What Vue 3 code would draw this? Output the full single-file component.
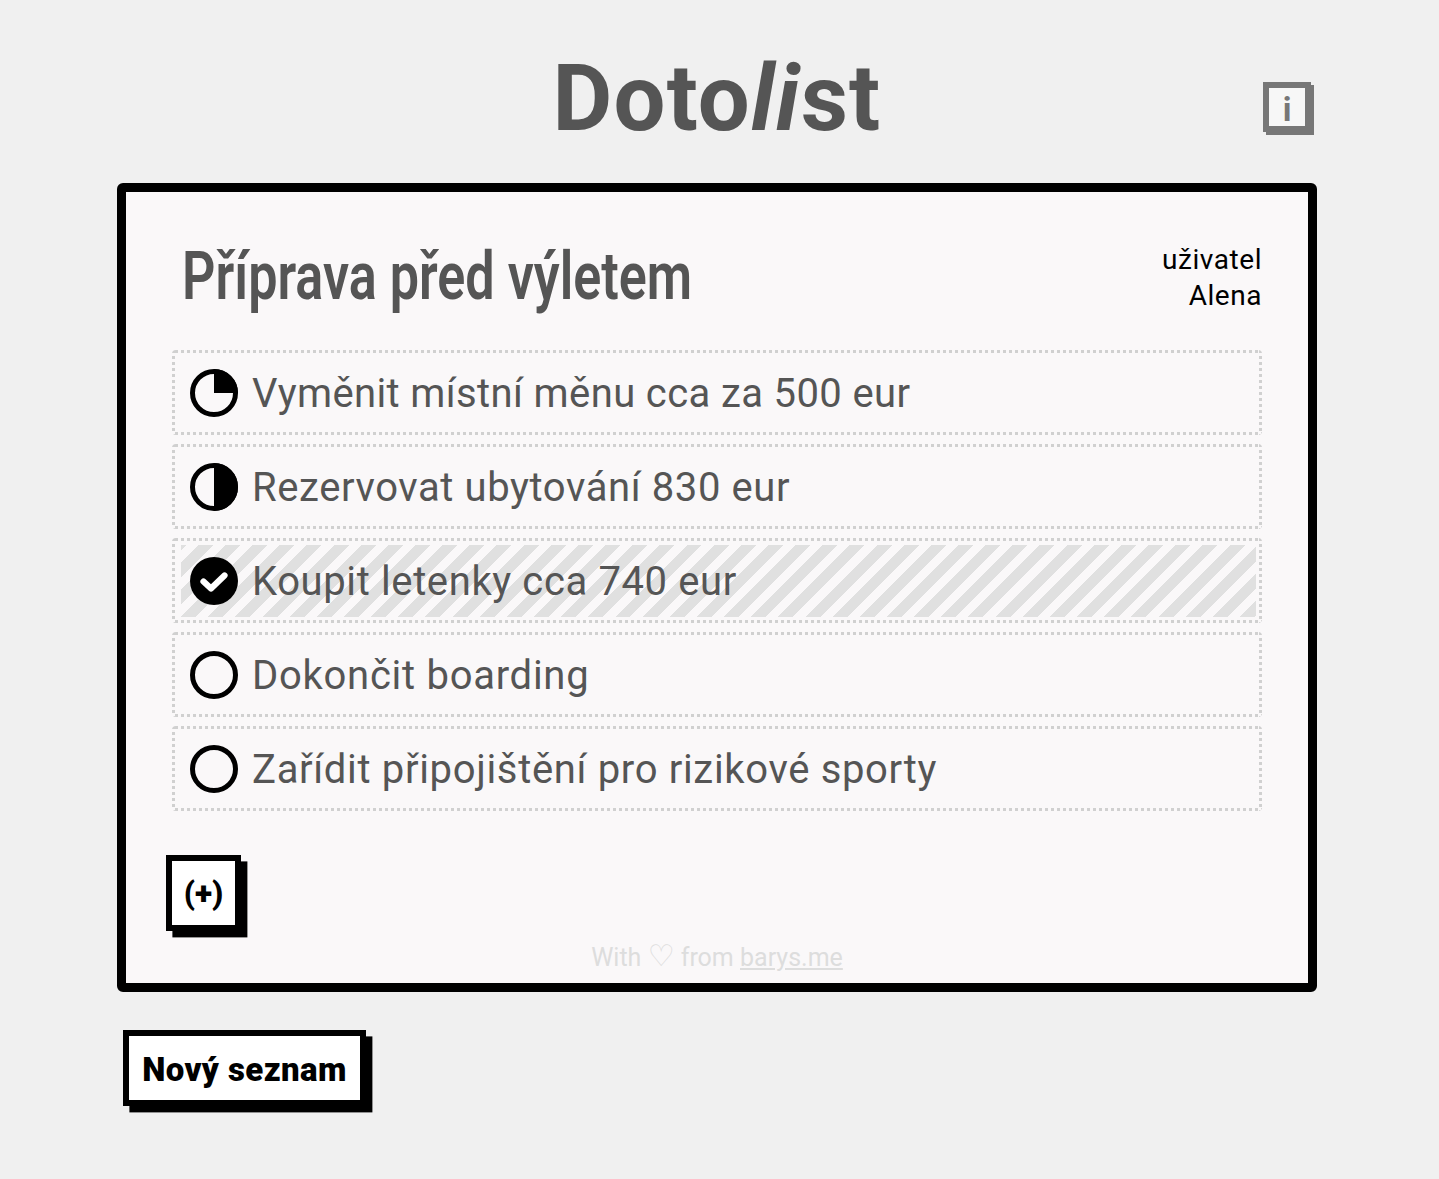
<script setup>
const tasks = [
  { id: 1, text: 'Vyměnit místní měnu cca za 500 eur', state: 'quarter', track: 0.38 },
  { id: 2, text: 'Rezervovat ubytování 830 eur', state: 'half', track: 0.6 },
  { id: 3, text: 'Koupit letenky cca 740 eur', state: 'done', track: 0.62 },
  { id: 4, text: 'Dokončit boarding', state: 'empty', track: 0.73 },
  { id: 5, text: 'Zařídit připojištění pro rizikové sporty', state: 'empty', track: 0.67 },
]
</script>

<template>
  <div class="page">
    <header class="top">
      <span></span>
      <h1 class="logo">Doto<i>li</i>st</h1>
      <button class="info">i</button>
    </header>

    <main class="card">
      <div class="head">
        <h2 class="title">Příprava před výletem</h2>
        <div class="user">uživatel<br />Alena</div>
      </div>

      <ul class="tasks">
        <li v-for="t in tasks" :key="t.id" class="task">
          <div class="task-inner" :class="{ striped: t.state === 'done' }">
            <svg class="icon" viewBox="0 0 48 48">
              <template v-if="t.state === 'done'">
                <circle cx="24" cy="24" r="24" fill="#000" />
                <path d="M13.5 24.5l7.5 7 13.5-13" fill="none" stroke="#fff" stroke-width="6.2" stroke-linecap="round" stroke-linejoin="round" />
              </template>
              <template v-else>
                <circle cx="24" cy="24" r="21.5" fill="none" stroke="#000" stroke-width="5" />
                <path v-if="t.state === 'quarter'" d="M24 0a24 24 0 0 1 24 24H24z" fill="#000" />
                <path v-if="t.state === 'half'" d="M24 0a24 24 0 0 1 0 48z" fill="#000" />
              </template>
            </svg>
            <span class="task-text" :style="{ letterSpacing: t.track + 'px' }">{{ t.text }}</span>
          </div>
        </li>
      </ul>

      <button class="add">(+)</button>

      <footer class="credit">With <span class="heart">♡</span> from <a href="#">barys.me</a></footer>
    </main>

    <button class="new">Nový seznam</button>
  </div>
</template>

<style>
html, body { background: #f0f0f0; }
</style>

<style scoped>
.page {
  width: 1200px;
  height: 1179px;
  margin-left: 117px;
  font-family: Roboto, "Liberation Sans", sans-serif;
  color: #555;
  overflow: hidden;
}
.top {
  height: 183px;
  display: grid;
  grid-template-columns: 1fr auto 1fr;
  align-items: start;
}
.logo {
  margin: 44px 0 0;
  font-size: 92px;
  line-height: 110px;
  font-weight: 700;
  letter-spacing: 1.2px;
}
.info {
  justify-self: end;
  margin: 82px 6px 0 0;
  width: 48px;
  height: 50px;
  padding: 3px 0 0;
  border: 6px solid #777;
  box-shadow: 3px 3px 0 #777;
  background: #f7f7f7;
  color: #777;
  font: 700 33px/38px Roboto, sans-serif;
}
.card {
  box-sizing: border-box;
  height: 809px;
  border: 9px solid #000;
  border-radius: 6px;
  background: #faf8f9;
  padding: 49px 46px 0;
}
.head {
  display: flex;
  justify-content: space-between;
  align-items: flex-start;
  height: 72px;
}
.title {
  margin: 0 0 0 10px;
  font-size: 66px;
  line-height: 72px;
  font-weight: 600;
  white-space: nowrap;
  transform: scaleX(0.79);
  transform-origin: left center;
}
.user {
  font-size: 28px;
  line-height: 36px;
  letter-spacing: 0.55px;
  color: #000;
  text-align: right;
  padding-top: 1px;
}
.tasks {
  list-style: none;
  margin: 37px 0 0;
  padding: 0;
  display: flex;
  flex-direction: column;
  gap: 9px;
}
.task {
  box-sizing: border-box;
  height: 85px;
  padding: 7px 6px 6px 9px;
  border-radius: 4px;
  background:
    linear-gradient(90deg, #d0d0d0 50%, transparent 0) 3px 0 / 6px 3px repeat-x,
    linear-gradient(90deg, #d0d0d0 50%, transparent 0) 3px 100% / 6px 3px repeat-x,
    linear-gradient(0deg, #d0d0d0 50%, transparent 0) 0 3px / 3px 6px repeat-y,
    linear-gradient(0deg, #d0d0d0 50%, transparent 0) 100% 3px / 3px 6px repeat-y;
}
.task-inner {
  height: 100%;
  display: flex;
  align-items: center;
  gap: 14px;
  padding-left: 9px;
}
.striped {
  background: repeating-linear-gradient(135deg, #e0e0e0 0 3.6px, transparent 3.6px 12.2px, #e0e0e0 12.2px 19.2px);
}
.icon {
  width: 48px;
  height: 48px;
  flex: none;
}
.task-text {
  font-size: 40px;
  line-height: 48px;
  white-space: nowrap;
  padding-top: 1px;
}
.add, .new {
  display: block;
  box-sizing: border-box;
  padding: 0;
  border: 6px solid #000;
  box-shadow: 6.4px 6.4px 0 #000;
  background: #fff;
  color: #000;
  font-family: Roboto, sans-serif;
  font-weight: 900;
}
.add {
  width: 75px;
  height: 76px;
  margin: 44px 0 0 -6px;
  font-size: 32px;
}
.credit {
  margin-top: 10px;
  text-align: center;
  font-size: 25px;
  line-height: 34px;
  color: #ddd;
}
.credit a { color: inherit; }
.heart {
  font-family: "DejaVu Sans", sans-serif;
  font-size: 30px;
  line-height: 1;
}
.new {
  width: 243px;
  height: 76px;
  margin: 38px 0 0 6px;
  font-size: 33px;
  letter-spacing: 0.4px;
  padding-top: 2px;
}
</style>
